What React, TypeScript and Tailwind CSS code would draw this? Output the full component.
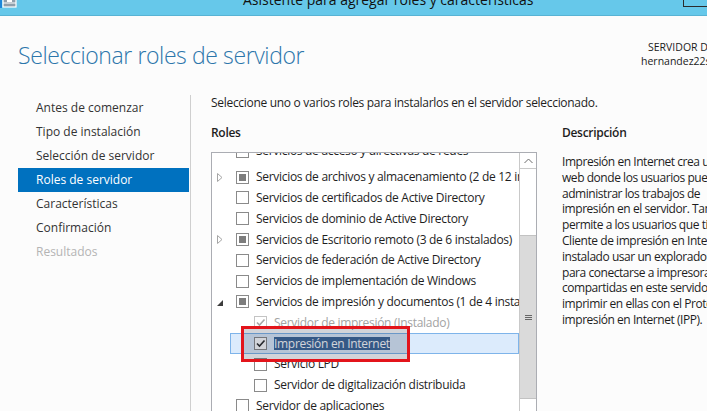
import React from 'react';

type Row = {
  label: string;
  level?: number;
  state?: 'none' | 'partial' | 'checked' | 'disabled';
  expander?: 'collapsed' | 'expanded';
  selected?: boolean;
  clipped?: boolean;
};

const rows: Row[] = [
  { label: 'Servicios de acceso y directivas de redes', clipped: true },
  { label: 'Servicios de archivos y almacenamiento (2 de 12 instalados)', state: 'partial', expander: 'collapsed' },
  { label: 'Servicios de certificados de Active Directory' },
  { label: 'Servicios de dominio de Active Directory' },
  { label: 'Servicios de Escritorio remoto (3 de 6 instalados)', state: 'partial', expander: 'collapsed' },
  { label: 'Servicios de federación de Active Directory' },
  { label: 'Servicios de implementación de Windows' },
  { label: 'Servicios de impresión y documentos (1 de 4 instalados)', state: 'partial', expander: 'expanded' },
  { label: 'Servidor de impresión (Instalado)', level: 1, state: 'disabled' },
  { label: 'Impresión en Internet', level: 1, state: 'checked', selected: true },
  { label: 'Servicio LPD', level: 1 },
  { label: 'Servidor de digitalización distribuida', level: 1 },
  { label: 'Servidor de aplicaciones' },
];

const steps = [
  'Antes de comenzar',
  'Tipo de instalación',
  'Selección de servidor',
  'Roles de servidor',
  'Características',
  'Confirmación',
  'Resultados',
];

const description = [
  'Impresión en Internet crea un sitio',
  'web donde los usuarios pueden',
  'administrar los trabajos de',
  'impresión en el servidor. También',
  'permite a los usuarios que tienen',
  'Cliente de impresión en Internet',
  'instalado usar un explorador web',
  'para conectarse a impresoras',
  'compartidas en este servidor e',
  'imprimir en ellas con el Protocolo de',
  'impresión en Internet (IPP).',
];

function Checkbox({ state }: { state: Row['state'] }) {
  const disabled = state === 'disabled';
  return (
    <div
      className={`w-[13px] h-[13px] shrink-0 border bg-white flex items-center justify-center ${
        disabled ? 'border-[#c4c4c4]' : 'border-[#8a8a8a]'
      }`}
    >
      {state === 'partial' && <div className="w-[7px] h-[7px] bg-[#7d7d7d]" />}
      {(state === 'checked' || disabled) && (
        <svg width="11" height="11" viewBox="0 0 11 11">
          <polyline
            points="2,5.5 4.5,8 9.5,2.5"
            fill="none"
            stroke={disabled ? '#a8a8a8' : '#2a2a2a'}
            strokeWidth="1.6"
          />
        </svg>
      )}
    </div>
  );
}

function Expander({ kind }: { kind?: Row['expander'] }) {
  return (
    <div className="w-[23px] h-full shrink-0 flex items-center pl-[4px]">
      {kind === 'collapsed' && (
        <svg width="6" height="9" viewBox="0 0 6 9">
          <polygon points="0.5,0.5 5,4.5 0.5,8.5" fill="none" stroke="#a6a6a6" strokeWidth="1" />
        </svg>
      )}
      {kind === 'expanded' && (
        <svg width="6" height="6" viewBox="0 0 6 6" className="mt-[2px]">
          <polygon points="6,0 6,6 0,6" fill="#3c3c3c" />
        </svg>
      )}
    </div>
  );
}

function RoleRow({ row }: { row: Row }) {
  const level = row.level ?? 0;
  const disabled = row.state === 'disabled';
  return (
    <div className={`h-[20.8px] flex ${level === 1 ? 'pl-[18px]' : ''}`}>
      <div
        className={`flex-1 flex items-center whitespace-nowrap border ${
          row.selected ? 'bg-[#dcebfc] border-[#7eb4ea]' : 'border-transparent'
        } ${row.clipped ? 'pb-[10px]' : ''}`}
      >
        <Expander kind={row.expander} />
        <Checkbox state={row.state ?? 'none'} />
        <span className={`ml-[7px] ${disabled ? 'text-[#a3a3a3]' : 'text-[#1e1e1e]'}`}>
          {row.selected ? (
            <span className="bg-[#3a6498] text-white leading-[13px] inline-block">{row.label}</span>
          ) : (
            row.label
          )}
        </span>
      </div>
    </div>
  );
}

function Scrollbar() {
  return (
    <div className="w-[17px] shrink-0 border-l border-[#c9c9c9] flex flex-col bg-white">
      <div className="h-[16px] border-b border-[#c9c9c9] flex items-center justify-center">
        <svg width="9" height="6" viewBox="0 0 9 6">
          <polyline points="0.5,5 4.5,1 8.5,5" fill="none" stroke="#6a6a6a" strokeWidth="1" />
        </svg>
      </div>
      <div className="mt-[66px] h-[164px] bg-[#dadada] border-y border-[#c2c2c2] flex flex-col items-center justify-center gap-[1px]">
        <div className="w-[7px] h-[1px] bg-[#666]" />
        <div className="w-[7px] h-[1px] bg-[#666]" />
        <div className="w-[7px] h-[1px] bg-[#666]" />
      </div>
    </div>
  );
}

export default function App() {
  return (
    <div
      className="w-[707px] h-[411px] overflow-hidden bg-[#fcfcfc] relative text-[12px]"
      style={{ fontFamily: '"Open Sans", "Noto Sans", sans-serif' }}
    >
      {/* title bar */}
      <div className="h-[16px] bg-[#66c8ea] border-b border-[#58b3d4] flex overflow-hidden relative">
        <svg width="17" height="8" viewBox="0 0 17 8" className="shrink-0">
          <rect x="0" y="0" width="2" height="8" fill="#1c86d8" />
          <rect x="3" y="-1" width="13" height="8" fill="#8f9eab" stroke="#ffffff" strokeWidth="1.2" />
          <line x1="3" y1="3" x2="16" y2="3" stroke="#ffffff" strokeWidth="1" />
          <rect x="7" y="0" width="5" height="2" fill="#ffffff" />
        </svg>
        <div className="pl-[226px] -mt-[7px] text-[14px] leading-[14px] text-[#111] whitespace-nowrap">
          Asistente para agregar roles y características
        </div>
        <div className="ml-auto mr-[-4px] w-[28px] h-[7px] border-l border-b border-[#2b2b2b]" />
      </div>

      {/* header */}
      <div className="h-[79px] flex">
        <div className="w-[641px] shrink-0 pl-[18px] pt-[28px] text-[23px] leading-[23px] tracking-[-0.4px] font-light text-[#2c76ab] whitespace-nowrap">
          Seleccionar roles de servidor
        </div>
        <div className="pt-[25px] text-[10.5px] leading-[13.5px] text-[#1a1a1a] whitespace-nowrap">
          <div className="pl-[7px]">SERVIDOR DE DESTINO</div>
          <div>hernandez22s.servidor.local</div>
        </div>
      </div>

      {/* body */}
      <div className="flex h-[316px]">
        <div className="w-[191px] shrink-0 border-r border-[#cfcfcf] pt-[1px] pl-[18px]">
          {steps.map((s, i) => (
            <div
              key={s}
              className={`h-[24px] w-[171px] pl-[18px] flex items-center whitespace-nowrap ${
                i === 3
                  ? 'bg-[#0071bf] text-white'
                  : i === 6
                  ? 'text-[#b4b4b4]'
                  : 'text-[#333333]'
              }`}
            >
              {s}
            </div>
          ))}
        </div>

        <div className="pl-[20px] flex flex-col tracking-[-0.3px]">
          <div className="leading-[16px] text-[#1e1e1e] whitespace-nowrap">
            Seleccione uno o varios roles para instalarlos en el servidor seleccionado.
          </div>
          <div className="flex mt-[14px]">
            <div className="w-[326px] shrink-0">
              <div className="leading-[16px] font-semibold text-[#1e1e1e]">Roles</div>
              <div className="mt-[11px] h-[270px] border border-[#abadb3] border-b-0 bg-white flex">
                <div className="flex-1 overflow-hidden">
                  <div className="-mt-[7px]">
                    {rows.map((r) => (
                      <RoleRow key={r.label} row={r} />
                    ))}
                  </div>
                </div>
                <Scrollbar />
              </div>
            </div>
            <div className="pl-[25px] whitespace-nowrap text-[#1e1e1e]">
              <div className="leading-[16px] font-semibold">Descripción</div>
              <div className="mt-[13px] leading-[15.8px] tracking-[-0.45px]">
                {description.map((l) => (
                  <div key={l}>{l}</div>
                ))}
              </div>
            </div>
          </div>
        </div>
      </div>

      {/* annotation */}
      <div className="absolute left-[241px] top-[326px] w-[169px] h-[36px] border-[3px] border-[#e3141b] bg-[#1e2a40]/20" />
    </div>
  );
}
